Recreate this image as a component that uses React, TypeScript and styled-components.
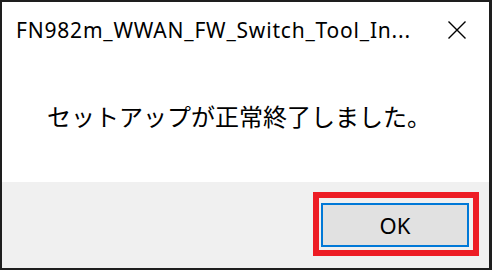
import React from "react";
import styled, { createGlobalStyle } from "styled-components";

const Global = createGlobalStyle`
  html, body { margin: 0; padding: 0; background: #1e1e1e; }
  body { width: 492px; height: 270px; overflow: hidden; }
`;

const Window = styled.div`
  margin: 2px 0 0 2px;
  width: 487px;
  height: 266px;
  display: flex;
  flex-direction: column;
  background: #ffffff;
  font-family: "Noto Sans", "Noto Sans CJK JP", sans-serif;
  color: #000;
`;

const TitleBar = styled.div`
  height: 56px;
  display: flex;
  align-items: center;
  justify-content: space-between;
  padding: 0 22px 0 14px;
`;

const Title = styled.div`
  font-size: 21px;
  letter-spacing: 0.8px;
  white-space: nowrap;
`;

const Close = styled.div`
  width: 20px;
  height: 20px;
  display: flex;
  align-items: center;
  justify-content: center;
`;

const Body = styled.div`
  flex: 1;
  display: flex;
  align-items: flex-start;
  padding: 43px 0 0 45px;
`;

const Message = styled.div`
  font-family: "Noto Sans CJK JP", sans-serif;
  font-size: 24px;
  line-height: 30px;
  white-space: nowrap;
`;

const Footer = styled.div`
  height: 86px;
  box-sizing: border-box;
  background: #f0f0f0;
  display: flex;
  justify-content: flex-end;
  align-items: flex-start;
  padding: 10px 10px 0 0;
`;

const Highlight = styled.div`
  border: 6px solid #ed1c24;
  padding: 5px 4px 3px 2px;
  display: flex;
`;

const Button = styled.button`
  width: 148px;
  height: 44px;
  box-sizing: border-box;
  border: 2px solid #0078d7;
  background: #e1e1e1;
  font-family: "Noto Sans", sans-serif;
  font-size: 22px;
  color: #000;
  padding: 0;
  display: flex;
  align-items: center;
  justify-content: center;
`;

export default function App() {
  return (
    <>
      <Global />
      <Window>
        <TitleBar>
          <Title>FN982m_WWAN_FW_Switch_Tool_In...</Title>
          <Close>
            <svg width="20" height="20" viewBox="0 0 20 20">
              <path d="M1.5 1.5 L18.5 18.5 M18.5 1.5 L1.5 18.5" stroke="#000" strokeWidth="1.4" fill="none" />
            </svg>
          </Close>
        </TitleBar>
        <Body>
          <Message>セットアップが正常終了しました。</Message>
        </Body>
        <Footer>
          <Highlight>
            <Button>OK</Button>
          </Highlight>
        </Footer>
      </Window>
    </>
  );
}
